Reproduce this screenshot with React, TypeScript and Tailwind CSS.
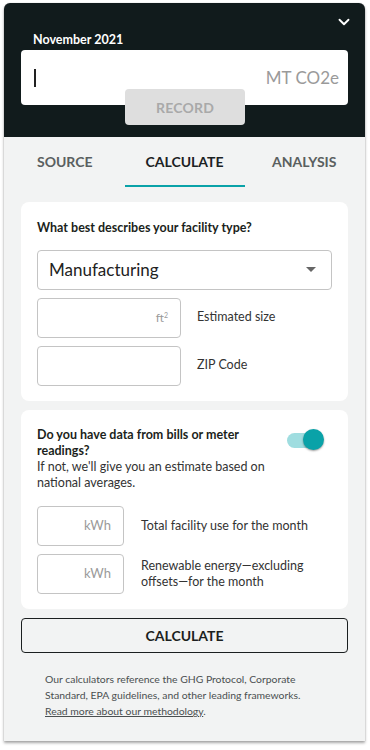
import { ChevronDown } from "lucide-react";

function UnitInput({ unit, width }: { unit?: string; width: string }) {
  return (
    <div className={`${width} h-[40px] rounded-[4px] border border-[#c4c4c4] bg-white flex items-center justify-end pr-[12px]`}>
      {unit === "ft" ? (
        <span className="text-[12px] text-[#9a9a9a]">
          ft<sup className="text-[7px]">2</sup>
        </span>
      ) : (
        unit && <span className="text-[13px] text-[#9a9a9a]">{unit}</span>
      )}
    </div>
  );
}

export default function App() {
  return (
    <div className="w-[370px] h-[750px] bg-white pt-[3px] px-[4px]" style={{ fontFamily: "Lato, 'Open Sans', sans-serif" }}>
      <div className="w-[361px] h-[738px] bg-[#f2f3f3] rounded-t-[6px] overflow-hidden shadow-[0_2px_3px_rgba(0,0,0,0.35),0_0_1px_rgba(0,0,0,0.3)]">
        {/* header */}
        <div className="bg-[#111b1c] h-[134px] px-[17px] pt-[29px] relative">
          <ChevronDown size={18} strokeWidth={2.5} className="text-white absolute right-[12px] top-[10px]" />
          <div className="text-white font-bold text-[12.5px] leading-[15px] ml-[12px]">November 2021</div>
          <div className="mt-[3px] h-[55px] bg-white rounded-[4px] flex items-center justify-between pl-[13px] pr-[9px]">
            <span className="w-[1.5px] h-[18px] bg-[#222]" />
            <span className="text-[17px] text-[#9a9a9a]">MT CO2e</span>
          </div>
          <div className="absolute left-[121px] top-[86px] w-[120px] h-[36px] rounded-[4px] bg-[#dedede] flex items-center justify-center text-[14px] font-bold text-[#a9a9a9] tracking-[0.2px]">
            RECORD
          </div>
        </div>

        {/* tabs */}
        <div className="flex h-[50px] px-[1px] pt-[14px]">
          <div className="flex-1 text-center text-[14px] font-bold text-[#5a5f60]">SOURCE</div>
          <div className="w-[120px] text-center text-[14px] font-bold text-[#1b2223] border-b-[2px] border-[#0aa2a8] h-[36px]">CALCULATE</div>
          <div className="flex-1 text-center text-[14px] font-bold text-[#5a5f60]">ANALYSIS</div>
        </div>

        <div className="px-[17px] pt-[15px]">
          {/* card 1 */}
          <div className="bg-white rounded-[8px] h-[199px] px-[16px] pt-[17px]">
            <div className="text-[12.5px] font-bold text-[#1b1f20]">What best describes your facility type?</div>
            <div className="mt-[12px] h-[40px] rounded-[4px] border border-[#c4c4c4] flex items-center justify-between pl-[11px] pr-[14px]">
              <span className="text-[17px] text-[#222]">Manufacturing</span>
              <svg width="12" height="7" viewBox="0 0 12 7">
                <path d="M1 1h10L6 6z" fill="#666" />
              </svg>
            </div>
            <div className="mt-[8px] flex items-center gap-[16px]">
              <UnitInput unit="ft" width="w-[144px]" />
              <span className="text-[12.5px] text-[#333]">Estimated size</span>
            </div>
            <div className="mt-[8px] flex items-center gap-[16px]">
              <UnitInput width="w-[144px]" />
              <span className="text-[12.5px] text-[#333]">ZIP Code</span>
            </div>
          </div>

          {/* card 2 */}
          <div className="mt-[9px] bg-white rounded-[8px] h-[199px] px-[16px] pt-[17px]">
            <div className="flex justify-between">
              <div className="w-[240px] text-[12.5px] font-bold text-[#1b1f20] leading-[16px]">
                Do you have data from bills or meter readings?
              </div>
              <div className="relative w-[38px] h-[22px] mr-[8px] mt-[2px]">
                <div className="absolute left-[1px] top-[4px] w-[30px] h-[15px] rounded-full bg-[#9fdde0]" />
                <div className="absolute right-0 top-0 w-[21px] h-[21px] rounded-full bg-[#0aa2a8] shadow-[0_1px_2px_rgba(0,0,0,0.4)]" />
              </div>
            </div>
            <div className="text-[12.5px] text-[#333] leading-[16px] w-[240px]">
              If not, we'll give you an estimate based on national averages.
            </div>
            <div className="mt-[15px] flex items-center gap-[17px]">
              <UnitInput unit="kWh" width="w-[87px]" />
              <span className="text-[12.5px] text-[#333]">Total facility use for the month</span>
            </div>
            <div className="mt-[8px] flex items-center gap-[17px]">
              <UnitInput unit="kWh" width="w-[87px]" />
              <span className="text-[12.5px] text-[#333] leading-[16px] w-[170px]">Renewable energy—excluding offsets—for the month</span>
            </div>
          </div>

          {/* calculate */}
          <div className="mt-[9px] h-[35px] rounded-[4px] border border-[#1b1f20] flex items-center justify-center text-[14px] font-bold text-[#1b1f20]">
            CALCULATE
          </div>

          <div className="mt-[18px] px-[24px] text-[10.4px] leading-[16px] text-[#4a4f50]">
            Our calculators reference the GHG Protocol, Corporate Standard, EPA guidelines, and other leading frameworks.
            <br />
            <span className="underline">Read more about our methodology</span>.
          </div>
        </div>
      </div>
    </div>
  );
}
